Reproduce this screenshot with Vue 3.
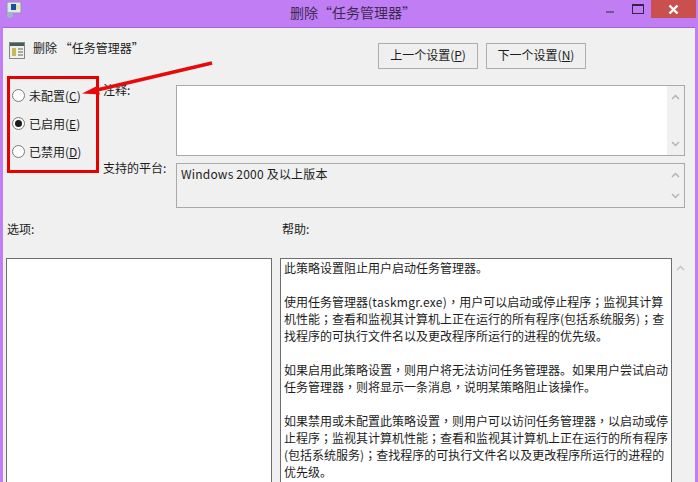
<script setup>
const radios = [
  { label: '未配置', key: 'C', on: false },
  { label: '已启用', key: 'E', on: true },
  { label: '已禁用', key: 'D', on: false }
]
const help = [
  ['此策略设置阻止用户启动任务管理器。'],
  ['使用任务管理器(taskmgr.exe)，用户可以启动或停止程序；监视其计算', '机性能；查看和监视其计算机上正在运行的所有程序(包括系统服务)；查', '找程序的可执行文件名以及更改程序所运行的进程的优先级。'],
  ['如果启用此策略设置，则用户将无法访问任务管理器。如果用户尝试启动', '任务管理器，则将显示一条消息，说明某策略阻止该操作。'],
  ['如果禁用或未配置此策略设置，则用户可以访问任务管理器，以启动或停', '止程序；监视其计算机性能；查看和监视其计算机上正在运行的所有程序', '(包括系统服务)；查找程序的可执行文件名以及更改程序所运行的进程的', '优先级。']
]
const pieces = (line) => line.split(/([，；]|\(taskmgr\.exe\))/).filter(Boolean)
const pieceClass = (bit) => (bit === '，' || bit === '；' ? 'punct' : bit.startsWith('(taskmgr') ? 'wide' : '')
</script>

<template>
  <div class="win">
    <header class="titlebar">
      <svg class="appicon" width="18" height="18" viewBox="0 0 18 18">
        <rect x="2" y="1" width="14" height="11" fill="#dfe6ee" stroke="#8b98a8"/>
        <rect x="6" y="3" width="5" height="6" fill="#1b4f9c"/>
        <circle cx="5" cy="14" r="3" fill="#9fb4c8"/>
        <rect x="11" y="4" width="4" height="4" fill="#e8dfa0"/>
      </svg>
      <h1 class="title">删除“任务管理器”</h1>
      <div class="controls">
        <span class="min"></span>
        <span class="max"></span>
        <span class="close">
          <svg width="11" height="11" viewBox="0 0 11 11"><path d="M1.5 1.5l8 8M9.5 1.5l-8 8" stroke="#fff" stroke-width="2.4"/></svg>
        </span>
      </div>
    </header>

    <main class="body">
      <div class="head">
        <div class="name">
          <svg width="16" height="17" viewBox="0 0 16 17">
            <rect x="0.5" y="0.5" width="15" height="16" fill="#f3f1e6" stroke="#7d8a86"/>
            <rect x="1" y="1" width="14" height="3" fill="#3f5f58"/>
            <rect x="3" y="6" width="4" height="8" fill="#c9b95e"/>
            <path d="M9 7h5M9 10h5M9 13h5" stroke="#55656a"/>
          </svg>
          <span class="nametext">删除 “任务管理器”</span>
        </div>
        <div class="navs">
          <button class="nav">上一个设置(<u>P</u>)</button>
          <button class="nav">下一个设置(<u>N</u>)</button>
        </div>
      </div>

      <div class="config">
        <div class="radios">
          <label v-for="r in radios" :key="r.key" class="radio">
            <span class="dot" :class="{ on: r.on }"></span>
            <span class="rtext">{{ r.label }}(<u>{{ r.key }}</u>)</span>
          </label>
        </div>
        <div class="fields">
          <span class="flabel">注释:</span>
          <div class="box note">
            <div class="sb">
              <svg width="9" height="6" viewBox="0 0 9 6"><path d="M1 5l3.5-3.5L8 5" fill="none" stroke="#b4b4b4" stroke-width="1.5"/></svg>
              <svg width="9" height="6" viewBox="0 0 9 6"><path d="M1 1l3.5 3.5L8 1" fill="none" stroke="#b4b4b4" stroke-width="1.5"/></svg>
            </div>
          </div>
          <span class="flabel">支持的平台:</span>
          <div class="box platform">
            <span class="ptext">Windows 2000 及以上版本</span>
            <div class="sb">
              <svg width="9" height="6" viewBox="0 0 9 6"><path d="M1 5l3.5-3.5L8 5" fill="none" stroke="#b4b4b4" stroke-width="1.5"/></svg>
              <svg width="9" height="6" viewBox="0 0 9 6"><path d="M1 1l3.5 3.5L8 1" fill="none" stroke="#b4b4b4" stroke-width="1.5"/></svg>
            </div>
          </div>
        </div>
      </div>

      <div class="panes">
        <section class="pane left">
          <span class="plabel">选项:</span>
          <div class="list"></div>
        </section>
        <section class="pane right">
          <span class="plabel">帮助:</span>
          <div class="helpwrap">
            <div class="list help">
              <p v-for="(para, i) in help" :key="i">
                <span v-for="line in para" :key="line" class="line"><span v-for="(bit, j) in pieces(line)" :key="j" :class="pieceClass(bit)">{{ bit }}</span></span>
              </p>
            </div>
            <div class="helpsb">
              <svg width="9" height="6" viewBox="0 0 9 6"><path d="M1 5l3.5-3.5L8 5" fill="none" stroke="#c4c4c4" stroke-width="1.5"/></svg>
            </div>
          </div>
        </section>
      </div>
    </main>

    <div class="redbox"></div>
    <svg class="arrow" width="140" height="40" viewBox="0 0 140 40">
      <path d="M131 3L16 30" stroke="#e60b0b" stroke-width="3.5"/>
      <path d="M1 33.5L16 26L19 34.5Z" fill="#e60b0b"/>
    </svg>
  </div>
</template>

<style scoped>
.win {
  position: relative;
  width: 698px;
  height: 482px;
  overflow: hidden;
  display: flex;
  flex-direction: column;
  box-sizing: border-box;
  padding: 0 3px;
  background: #c17df3;
  color: #1c1c1c;
  font-family: "Noto Sans CJK SC", "Liberation Sans", sans-serif;
  font-size: 12px;
}
.titlebar {
  height: 27px;
  flex: none;
  display: flex;
  align-items: center;
  position: relative;
  margin: 0 -3px;
  padding-left: 5px;
}
.appicon { margin-top: -7px; }
.title {
  position: absolute;
  left: 0;
  right: 0;
  margin: 0;
  top: 2px;
  text-align: center;
  font-size: 14px;
  line-height: 20px;
  font-weight: 400;
  color: #3a2b55;
  text-indent: 8px;
}
.controls {
  position: absolute;
  top: 0;
  right: 2px;
  display: flex;
  align-items: flex-start;
}
.min { width: 8px; height: 2px; background: #6f5a8c; margin: 11px 18px 0 0; }
.max { width: 10px; height: 7px; box-sizing: content-box; border: 1px solid #33234d; border-top-width: 2px; margin: 4px 7px 0 0; }
.close {
  width: 45px;
  height: 18px;
  background: #c9504f;
  display: flex;
  align-items: center;
  justify-content: center;
}
.body {
  flex: 1;
  min-height: 0;
  background: #f0f0f0;
  display: flex;
  flex-direction: column;
  border-top: 1px solid #a763d8;
}
.head {
  display: flex;
  justify-content: space-between;
  height: 57px;
  padding: 15px 109px 0 6px;
  box-sizing: border-box;
}
.name { display: flex; align-items: flex-start; gap: 8px; margin-top: -1px; }
.nametext { line-height: 18px; font-size: 12px; margin-top: -3px; }
.navs { display: flex; gap: 8px; }
.nav {
  width: 100px;
  height: 26px;
  padding: 0 0 3px;
  border: 1px solid #adadad;
  background: #efefef;
  font: inherit;
  color: inherit;
  display: block;
}
.config {
  display: flex;
  height: 124px;
  padding-left: 5px;
}
.radios {
  width: 95px;
  flex: none;
  display: flex;
  flex-direction: column;
  gap: 11px;
  padding: 2px 0 0 4px;
  box-sizing: border-box;
}
.radio { display: flex; align-items: center; gap: 4px; height: 17px; line-height: 17px; }
.rtext { margin-top: -1px; }
.dot {
  width: 13px;
  height: 13px;
  box-sizing: border-box;
  border: 1px solid #7a7a7a;
  border-radius: 50%;
  background: #fff;
  position: relative;
}
.dot.on::after {
  content: "";
  position: absolute;
  inset: 2px;
  border-radius: 50%;
  background: #1c1c1c;
}
.fields {
  flex: 1;
  display: grid;
  grid-template-columns: 73px 509px;
  grid-template-rows: 71px 45px;
  row-gap: 7px;
}
.flabel { line-height: 17px; margin-top: -4px; }
.box {
  border: 1px solid #a9a9a9;
  box-sizing: border-box;
  position: relative;
}
.note { background: #fff; }
.platform { background: #f0f0f0; padding: 1px 0 0 4px; line-height: 17px; }
.ptext { letter-spacing: 0.2px; }
.sb {
  position: absolute;
  right: 0;
  top: 0;
  bottom: 0;
  width: 17px;
  background: #f0f0f0;
  display: flex;
  flex-direction: column;
  justify-content: space-between;
  align-items: center;
  padding: 8px 0;
  box-sizing: border-box;
}
.panes {
  display: grid;
  grid-template-columns: 266px 392px;
  column-gap: 8px;
  padding: 0 0 0 3px;
  margin-top: 10px;
  flex: 1;
  min-height: 0;
}
.pane { display: flex; flex-direction: column; min-height: 0; }
.plabel { line-height: 17px; height: 39px; box-sizing: border-box; padding-top: 1px; flex: none; padding-left: 1px; }
.right .plabel { padding-left: 2px; }
.list {
  flex: 1;
  background: #fff;
  border: 1px solid #6e6e6e;
  border-bottom: 0;
  box-sizing: border-box;
}
.helpwrap { flex: 1; min-height: 0; display: flex; position: relative; }
.help {
  width: 392px;
  flex: none;
  padding: 0 0 0 3px;
  line-height: 17px;
  overflow: hidden;
}
.help p { margin: 0 0 17px; }
.line { display: block; white-space: nowrap; }
.punct { font-family: "Noto Sans CJK TC", sans-serif; }
.wide { letter-spacing: 0.3px; }
.helpsb { width: 17px; flex: none; display: flex; justify-content: center; padding-top: 7px; align-items: flex-start; }
.redbox {
  position: absolute;
  left: 7px;
  top: 76px;
  width: 92px;
  height: 97px;
  box-sizing: border-box;
  border: 3px solid #e60000;
  pointer-events: none;
}
.arrow {
  position: absolute;
  left: 81px;
  top: 60px;
  pointer-events: none;
}
</style>
